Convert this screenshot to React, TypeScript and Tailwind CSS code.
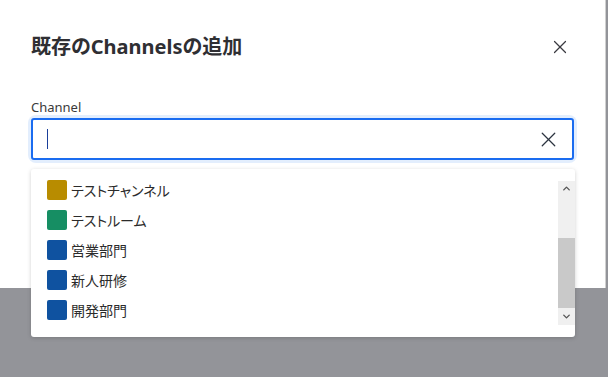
import { X, ChevronUp, ChevronDown } from "lucide-react";

type Channel = { name: string; color: string };

const CHANNELS: Channel[] = [
  { name: "テストチャンネル", color: "#b88c00" },
  { name: "テストルーム", color: "#168e63" },
  { name: "営業部門", color: "#0f52a0" },
  { name: "新人研修", color: "#0f52a0" },
  { name: "開発部門", color: "#0f52a0" },
];

export default function App() {
  return (
    <div
      className="relative h-[377px] w-[608px] overflow-hidden bg-[#939499] [font-feature-settings:'palt']"
      style={{ fontFamily: '"Noto Sans", "Noto Sans CJK JP", sans-serif' }}
    >
      {/* Dialog */}
      <div className="h-[288px] w-[606px] border-r border-[#d0d0d0] bg-white px-[31px] pt-[30px]">
        <div className="flex items-center justify-between">
          <h2 className="text-[20px] font-bold leading-[34px] text-[#2f2f33]">既存のChannelsの追加</h2>
          <button className="mr-[3px] text-[#3a3a40]">
            <X className="h-[22px] w-[22px]" strokeWidth={1.3} />
          </button>
        </div>

        <div className="mt-[34px] text-[13px] leading-[18px] text-[#3a3a3a]">Channel</div>
        <div className="mt-[2px] rounded-[5px] ring-[3px] ring-[#e3eefd]">
          <div className="flex h-[42px] items-center rounded-[3px] border-2 border-[#1a6cf0] bg-white pl-[14px] pr-[11px]">
            <span className="h-[20px] w-[1px] bg-[#1a3f9a]" />
            <div className="flex-1" />
            <X className="h-[25px] w-[25px] text-[#2c3440]" strokeWidth={1.2} />
          </div>
        </div>
      </div>

      {/* Dropdown list */}
      <div className="absolute left-[31px] top-[169px] flex h-[168px] w-[544px] rounded-[3px] bg-white shadow-[0_1px_4px_rgba(0,0,0,0.18)]">
        <ul className="flex-1 pl-[16px] pt-[6px]">
          {CHANNELS.map((c) => (
            <li key={c.name} className="flex h-[30px] items-center gap-[4px]">
              <span className="h-[20px] w-[20px] rounded-[2px]" style={{ backgroundColor: c.color }} />
              <span className="text-[14px] text-[#2b2b2b]">{c.name}</span>
            </li>
          ))}
        </ul>
        <div className="my-[12px] flex w-[17px] flex-col bg-[#f0f0f0]">
          <div className="flex h-[14px] items-center justify-center">
            <ChevronUp className="h-[11px] w-[11px] text-[#555]" strokeWidth={3} />
          </div>
          <div className="h-[43px]" />
          <div className="h-[70px] bg-[#c9c9c9]" />
          <div className="flex flex-1 items-center justify-center">
            <ChevronDown className="h-[11px] w-[11px] text-[#555]" strokeWidth={3} />
          </div>
        </div>
      </div>
    </div>
  );
}
